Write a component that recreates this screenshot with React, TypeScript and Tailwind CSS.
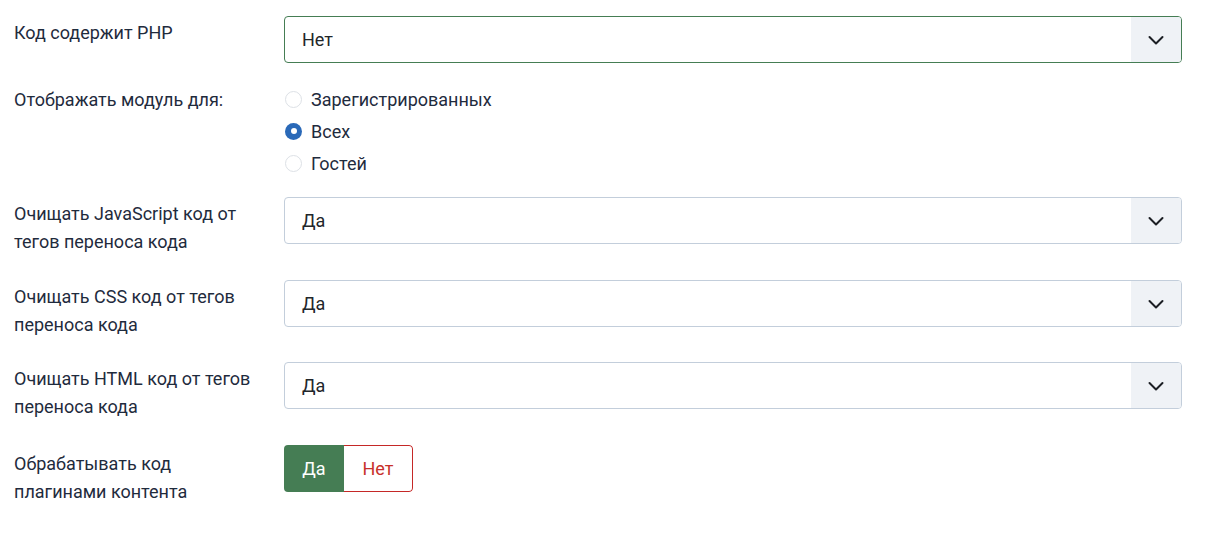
import React from "react";

const Chevron = () => (
  <svg width="16" height="16" viewBox="0 0 16 16" fill="none">
    <path d="M1.5 5l6.5 6.5 6.5-6.5" stroke="#1c1f24" strokeWidth="2" strokeLinecap="round" strokeLinejoin="round" />
  </svg>
);

function Select({ value, green = false }: { value: string; green?: boolean }) {
  return (
    <div
      className={`flex h-[47px] flex-1 items-stretch overflow-hidden rounded-[4px] border bg-white ${
        green ? "border-[#457d54]" : "border-[#c3cedb]"
      }`}
    >
      <div className="flex flex-1 items-center pl-[17px] text-[18px] text-[#22262a]">{value}</div>
      <div className="flex w-[50px] items-center justify-center bg-[#eff2f6]">
        <Chevron />
      </div>
    </div>
  );
}

function Label({ children, pt = "pt-[3px]" }: { children: React.ReactNode; pt?: string }) {
  return (
    <div className={`w-[270px] shrink-0 pr-[30px] text-[18px] leading-[28px] text-[#1f2b3d] ${pt}`}>
      {children}
    </div>
  );
}

function Radio({ checked, label }: { checked?: boolean; label: string }) {
  return (
    <div className="flex h-[32px] items-center">
      {checked ? (
        <span className="ml-[1px] flex h-[17px] w-[17px] items-center justify-center rounded-full bg-[#2a69b8]">
          <span className="h-[6px] w-[6px] rounded-full bg-white" />
        </span>
      ) : (
        <span className="ml-[1px] h-[17px] w-[17px] rounded-full border border-[#dde1e6] bg-white" />
      )}
      <span className="ml-[9px] text-[18px] text-[#1f2b3d]">{label}</span>
    </div>
  );
}

export default function App() {
  return (
    <div
      className="min-h-[546px] w-[1207px] bg-white pl-[14px] pr-[25px] pt-[16px]"
      style={{ fontFamily: "Roboto, 'Noto Sans', sans-serif" }}
    >
      <div className="flex h-[68px] items-start">
        <Label>Код содержит PHP</Label>
        <Select value="Нет" green />
      </div>

      <div className="flex h-[113px] items-start">
        <Label pt="pt-[2px]">Отображать модуль для:</Label>
        <div className="-mt-[1px] flex flex-col">
          <Radio label="Зарегистрированных" />
          <Radio label="Всех" checked />
          <Radio label="Гостей" />
        </div>
      </div>

      <div className="flex h-[83px] items-start">
        <Label>Очищать JavaScript код от тегов переноса кода</Label>
        <Select value="Да" />
      </div>

      <div className="flex h-[82px] items-start">
        <Label>Очищать CSS код от тегов переноса кода</Label>
        <Select value="Да" />
      </div>

      <div className="flex h-[83px] items-start">
        <Label>Очищать HTML код от тегов переноса кода</Label>
        <Select value="Да" />
      </div>

      <div className="flex items-start">
        <Label pt="pt-[5px]">Обрабатывать код плагинами контента</Label>
        <div className="flex h-[47px] overflow-hidden rounded-[4px]">
          <div className="flex w-[60px] items-center justify-center bg-[#457d54] text-[18px] text-white">Да</div>
          <div className="flex w-[69px] items-center justify-center rounded-r-[4px] border border-l-0 border-[#c52827] bg-white text-[18px] text-[#c8302b]">
            Нет
          </div>
        </div>
      </div>
    </div>
  );
}
